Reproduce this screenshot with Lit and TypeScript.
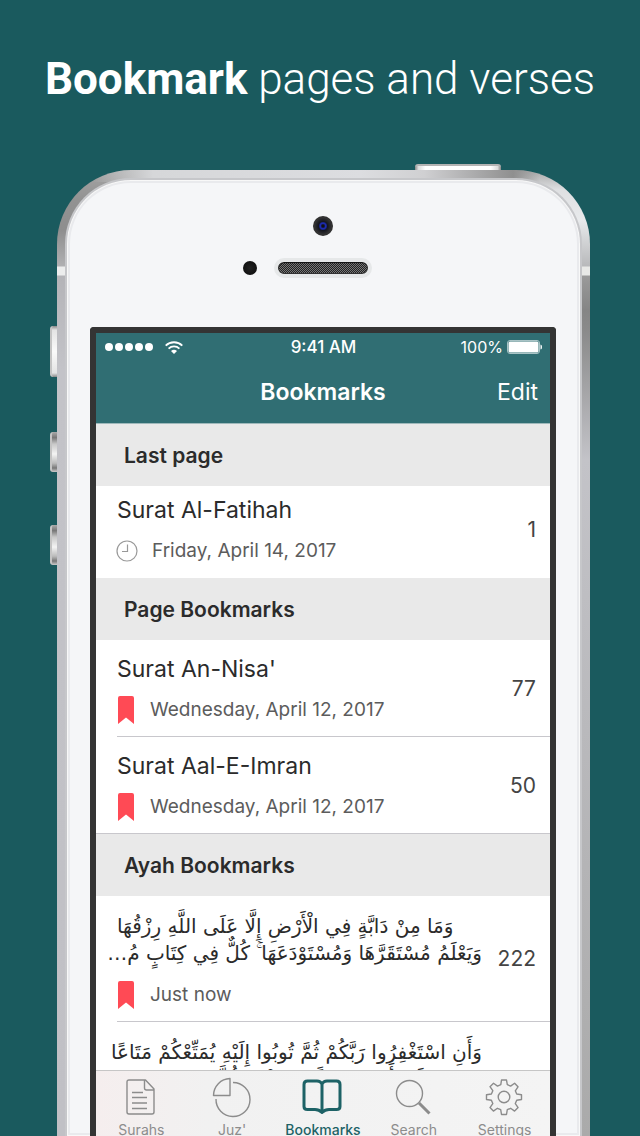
import { LitElement, html, css, svg, nothing } from "lit";
import { customElement, state } from "lit/decorators.js";
import { classMap } from "lit/directives/class-map.js";

interface Bookmark {
  title?: string;
  ayah?: string[];
  when: string;
  page?: number;
  icon: "clock" | "ribbon";
}

interface Section {
  heading: string;
  items: Bookmark[];
}

const sections: Section[] = [
  {
    heading: "Last page",
    items: [{ title: "Surat Al-Fatihah", when: "Friday, April 14, 2017", page: 1, icon: "clock" }],
  },
  {
    heading: "Page Bookmarks",
    items: [
      { title: "Surat An-Nisa'", when: "Wednesday, April 12, 2017", page: 77, icon: "ribbon" },
      { title: "Surat Aal-E-Imran", when: "Wednesday, April 12, 2017", page: 50, icon: "ribbon" },
    ],
  },
  {
    heading: "Ayah Bookmarks",
    items: [
      {
        ayah: [
          "وَمَا مِنْ دَابَّةٍ فِي الْأَرْضِ إِلَّا عَلَى اللَّهِ رِزْقُهَا",
          "وَيَعْلَمُ مُسْتَقَرَّهَا وَمُسْتَوْدَعَهَا ۚ كُلٌّ فِي كِتَابٍ مُ…",
        ],
        when: "Just now",
        page: 222,
        icon: "ribbon",
      },
      {
        ayah: [
          "وَأَنِ اسْتَغْفِرُوا رَبَّكُمْ ثُمَّ تُوبُوا إِلَيْهِ يُمَتِّعْكُمْ مَتَاعًا",
          "حَسَنًا إِلَى أَجَلٍ مُسَمًّى وَيُؤْتِ كُلَّ ذِي فَضْلٍ…",
        ],
        when: "Just now",
        icon: "ribbon",
      },
    ],
  },
];

const tabs = [
  {
    label: "Surahs",
    icon: svg`<path d="M7 1h16.500L32 10v23q0 2-2 2H7q-2 0-2-2V3q0-2 2-2zM22.500 1v8q0 2 2 2H32"/><path d="M10 13.500h11M10 18.500h15M10 24h15M10 29.500h15"/>`,
  },
  {
    label: "Juz'",
    icon: svg`<path d="M17-.500v17H.500A17 17 0 0 1 17-.500z"/><path d="M20 3.500A17 17 0 1 1 3 20"/>`,
  },
  {
    label: "Bookmarks",
    icon: svg`<path d="M18 5q-1.500-3-5-3H3.500Q0 2 0 5.500v22Q0 30.500 3.500 30.500H11q4 0 7 3 3-3 7-3h7.500q3.500 0 3.500-3v-22Q36 2 32.500 2H23q-3.500 0-5 3zv28"/>`,
  },
  {
    label: "Search",
    icon: svg`<circle cx="14.500" cy="14.500" r="13"/><path class="handle" d="M24 24 34.500 34.500"/>`,
  },
  {
    label: "Settings",
    icon: svg`<circle cx="18" cy="18" r="5.800"/><path d="M15.500 1h5l.8 4.700 3.300 1.400 4-2.800 3.400 3.500-2.700 4 1.400 3.200 4.800.7v4.800l-4.800.8-1.400 3.300 2.800 4-3.500 3.500-4-2.800-3.300 1.400-.8 4.800h-5l-.8-4.800-3.300-1.400-4 2.800L4 28.600l2.800-4-1.400-3.300-4.900-.8v-4.800l4.900-.7 1.400-3.300-2.800-4 3.500-3.400 4 2.800 3.300-1.400z"/>`,
  },
];

@customElement("app-root")
export class AppRoot extends LitElement {
  @state() private activeTab = "Bookmarks";

  static styles = css`
    :host {
      display: flex;
      flex-direction: column;
      height: 100vh;
      overflow: hidden;
      background: #1a5a5e;
      color: #2b2b2b;
      font-family: Inter, "Liberation Sans", sans-serif;
    }
    * {
      box-sizing: border-box;
    }
    h1, h2, h3, p, ul {
      margin: 0;
      padding: 0;
      font-weight: inherit;
    }
    button {
      border: 0;
      padding: 0;
      background: none;
      color: inherit;
      font: inherit;
    }
    svg {
      display: block;
      flex: none;
      overflow: visible;
    }
    .tagline {
      flex: none;
      padding: 53px 20px 59px;
      color: #fff;
      font: 300 44px/52px Roboto, sans-serif;
      text-align: center;
      white-space: nowrap;
    }
    .tagline strong {
      font-weight: 700;
    }
    .stage {
      flex: 1;
      min-height: 0;
      display: grid;
      grid-template: 6px 1fr / 7px 1fr;
      padding: 0 50px;
    }
    .power {
      grid-column: 2;
      justify-self: end;
      width: 86px;
      margin-right: 89px;
      border-radius: 3px 3px 0 0;
      border-top: 2px solid #b4b4b4;
      background: linear-gradient(90deg, #888, #ddd 4%, #fff 12% 88%, #ddd 96%, #888);
    }
    .side {
      display: flex;
      flex-direction: column;
      padding-top: 156px;
    }
    .key {
      height: 40px;
      margin-bottom: 53px;
      border-radius: 3px 0 0 3px;
      border-left: 2px solid #c4c4c4;
      background: linear-gradient(#aaa, #777 14%, #c8c8c8 30%, #f4f4f4 55%, #bbb 78%, #777 90%, #ccc);
    }
    .key.mute {
      height: 51px;
      margin-bottom: 55px;
      background: linear-gradient(#888, #e4e4e4 8%, #fafafa 50%, #e4e4e4 92%, #888);
    }
    .body {
      display: flex;
      min-height: 0;
      padding: 8px 8px 0;
      border-radius: 74px 74px 0 0;
      background:
        linear-gradient(90deg, #d6d7d900 0, #d6d7d9 60px, #dcdde0 60%, #d0d0d2 74%, #8f8f8f 94%, #8f8f8f00) 36px 0 / calc(100% - 86px) 12px no-repeat,
        linear-gradient(#a4a4a4 0, #929292 30px, #8e8e8e 60px, #b0b0b2 96px, #eceded 97px 105px, #b4b4b8 106px, #c3c3c8 200px, #c0c0c5) 0 0 / 50% 100% no-repeat,
        linear-gradient(#a8a8a8 0, #dfe0e2 20px, #e8eaec 50px, #b8b9bb 96px, #e8e9e7 97px 105px, #9a9a9a 106px, #858585 140px, #8a8a8a 160px, #c3c3c8 290px, #aaa 100%) 100% 0 / 50% 100% no-repeat;
    }
    .face {
      flex: 1;
      display: flex;
      flex-direction: column;
      align-items: center;
      min-width: 0;
      padding: 36px 24px 0 23px;
      border: solid #c6c7ca;
      border-width: 2px 2px 0;
      border-radius: 66px 66px 0 0;
      background: #f5f6f8;
      box-shadow: inset 0 0 0 1px #f8f8f8, inset 0 0 0 3px #e9eaed;
    }
    .camera {
      flex: none;
      width: 20px;
      height: 20px;
      border-radius: 50%;
      background: radial-gradient(#111 0 8%, #1c2bb0 18% 22%, #14161f 32%, #333 60%, #1c1c1c 100%);
    }
    .ear {
      flex: none;
      align-self: stretch;
      display: grid;
      grid-template-columns: 1fr auto 1fr;
      align-items: center;
      margin: 22px 0 49px;
    }
    .sensor {
      justify-self: end;
      width: 14px;
      height: 14px;
      margin-right: 17px;
      border-radius: 50%;
      background: radial-gradient(#222, #0b0b0b);
    }
    .speaker {
      width: 98px;
      height: 20px;
      border: 4px solid #e6e8e9;
      border-radius: 10px;
      background: #2a2a2a repeating-conic-gradient(#222 0 25%, #777 0 50%) 0 0 / 2px 2px;
      box-shadow: inset 0 1px 1px #111, inset 0 0 0 1px #333;
    }
    .screen {
      flex: 1;
      align-self: stretch;
      display: flex;
      flex-direction: column;
      min-height: 0;
      border: solid #343434;
      border-width: 6px 6px 0;
      border-radius: 4px 4px 0 0;
      background: #fff;
    }
    .bar {
      flex: none;
      border-bottom: 1px solid #9fb9bb;
      background: #306e73;
      color: #fff;
    }
    .status, .nav {
      display: grid;
      grid-template-columns: 1fr auto 1fr;
      align-items: center;
    }
    .status {
      height: 28px;
      padding: 0 8px 0 9px;
      line-height: 20px;
    }
    .signal, .power-level {
      display: flex;
      align-items: center;
    }
    .signal {
      gap: 12px;
    }
    .power-level {
      justify-content: flex-end;
      gap: 4px;
    }
    .time {
      font-size: 17px;
      font-weight: 500;
    }
    .level {
      font-size: 16px;
    }
    .nav {
      height: 62px;
      padding: 0 12px;
      font-size: 23px;
      line-height: 32px;
    }
    .nav-title {
      grid-column: 2;
      font-size: 23px;
      font-weight: 600;
    }
    .edit {
      justify-self: end;
    }
    .list {
      flex: 1;
      min-height: 0;
      overflow: hidden;
    }
    .heading {
      padding: 17px 28px 15px;
      background: #e9e9e9;
      font-size: 21px;
      font-weight: 600;
      line-height: 30px;
    }
    section:last-child .heading {
      box-shadow: 0 -1px #c8c7cc;
    }
    .rows {
      list-style: none;
    }
    .row {
      display: flex;
      align-items: center;
      margin-left: 21px;
      padding: 13px 14px 12px 0;
      border-bottom: 1px solid #c8c7cc;
    }
    .row:last-child {
      border-color: transparent;
    }
    .row.recent {
      padding-top: 8px;
    }
    .entry {
      flex: 1;
      min-width: 0;
    }
    .title {
      margin-bottom: 11px;
      font-size: 23px;
      line-height: 32px;
    }
    .ayah {
      width: 365px;
      margin-bottom: 14px;
      padding-top: 4px;
      font: 20px/27px "DejaVu Sans", sans-serif;
      text-align: left;
      white-space: nowrap;
    }
    .ayah span {
      display: block;
    }
    .meta {
      display: flex;
      align-items: center;
      gap: 15px;
      color: #5c5c5c;
      font-size: 19px;
      line-height: 28px;
    }
    .page {
      color: #444;
      font-size: 21px;
      line-height: 28px;
    }
    .tabs {
      flex: none;
      display: grid;
      grid-template-columns: repeat(5, 1fr);
      height: 66px;
      overflow: hidden;
      border-top: 1px solid #c6c6c6;
      background: linear-gradient(90deg, #f5eeee, #f1f1f1 25%, #f4f4f4);
      color: #8c8c8c;
    }
    .tab {
      display: flex;
      flex-direction: column;
      align-items: center;
      gap: 6px;
      padding-top: 8px;
      font-size: 14px;
      line-height: 18px;
    }
    .tab svg {
      fill: none;
      stroke: currentColor;
      stroke-width: 1.4;
      stroke-linejoin: round;
    }
    .tab .handle {
      stroke-width: 3;
    }
    .tab.active {
      color: #1d6266;
      font-weight: 500;
    }
    .tab.active svg {
      stroke-width: 3;
    }
  `;

  private renderIcon(kind: Bookmark["icon"]) {
    return kind === "clock"
      ? html`<svg width="20" height="28" viewBox="0 0 20 28" fill="none" stroke="#999" aria-hidden="true">
          <circle cx="10" cy="14" r="10" stroke-width="1.200" />
          <path d="M10.500 7.500v7H5" stroke-width="1.200" />
        </svg>`
      : html`<svg width="18" height="28" viewBox="0 0 18 28" aria-hidden="true">
          <path d="M1 2q0-2 2-2h12q2 0 2 2v26l-8-6.500L1 28z" fill="#ff4a55" />
        </svg>`;
  }

  private renderRow(item: Bookmark) {
    return html`
      <li class=${classMap({ row: true, recent: item.icon === "clock" })}>
        <div class="entry">
          ${item.ayah
            ? html`<h3 class="ayah" lang="ar" dir="rtl">${item.ayah.map((line) => html`<span>${line}</span>`)}</h3>`
            : html`<h3 class="title">${item.title}</h3>`}
          <p class="meta">${this.renderIcon(item.icon)}<span>${item.when}</span></p>
        </div>
        ${item.page === undefined ? nothing : html`<span class="page">${item.page}</span>`}
      </li>
    `;
  }

  render() {
    return html`
      <h1 class="tagline"><strong>Bookmark</strong> pages and verses</h1>
      <div class="stage">
        <div class="power"></div>
        <div class="side">
          <div class="key mute"></div>
          <div class="key"></div>
          <div class="key"></div>
        </div>
        <div class="body">
          <div class="face">
            <div class="camera"></div>
            <div class="ear">
              <div class="sensor"></div>
              <div class="speaker"></div>
            </div>
            <main class="screen">
              <header class="bar">
                <div class="status">
                  <div class="signal">
                    <svg width="48" height="8" fill="#fff" aria-hidden="true">
                      ${[4, 14, 24, 34, 44].map((x) => svg`<circle cx=${x} cy="4" r="4" />`)}
                    </svg>
                    <svg width="18" height="13" viewBox="0 0 18 13" fill="none" stroke="#fff" stroke-width="1.800" aria-hidden="true">
                      <path d="M.700 4.600a12 12 0 0 1 16.600 0M3.600 7.600a7.800 7.800 0 0 1 10.800 0" />
                      <path d="M9 13 6 10q3-2.600 6 0z" fill="#fff" stroke="none" />
                    </svg>
                  </div>
                  <span class="time">9:41 AM</span>
                  <div class="power-level">
                    <span class="level">100%</span>
                    <svg width="35" height="14" viewBox="0 0 35 14" aria-hidden="true">
                      <rect x=".500" y=".500" width="32" height="13" rx="2.500" fill="none" stroke="#a9c4c6" />
                      <rect x="1.500" y="1.500" width="30" height="11" rx="1.500" fill="#fff" />
                      <path d="M33.500 4.500q1.500 0 1.500 2.500t-1.500 2.500z" fill="#fff" />
                    </svg>
                  </div>
                </div>
                <nav class="nav">
                  <h2 class="nav-title">Bookmarks</h2>
                  <button class="edit" type="button">Edit</button>
                </nav>
              </header>
              <div class="list">
                ${sections.map(
                  (section) => html`
                    <section>
                      <h2 class="heading">${section.heading}</h2>
                      <ul class="rows">${section.items.map((item) => this.renderRow(item))}</ul>
                    </section>
                  `,
                )}
              </div>
              <nav class="tabs">
                ${tabs.map(
                  (tab) => html`
                    <button
                      type="button"
                      class=${classMap({ tab: true, active: tab.label === this.activeTab })}
                      @click=${() => (this.activeTab = tab.label)}
                    >
                      <svg width="36" height="36" viewBox="1 0 36 36" aria-hidden="true">${tab.icon}</svg>
                      ${tab.label}
                    </button>
                  `,
                )}
              </nav>
            </main>
          </div>
        </div>
      </div>
    `;
  }
}
